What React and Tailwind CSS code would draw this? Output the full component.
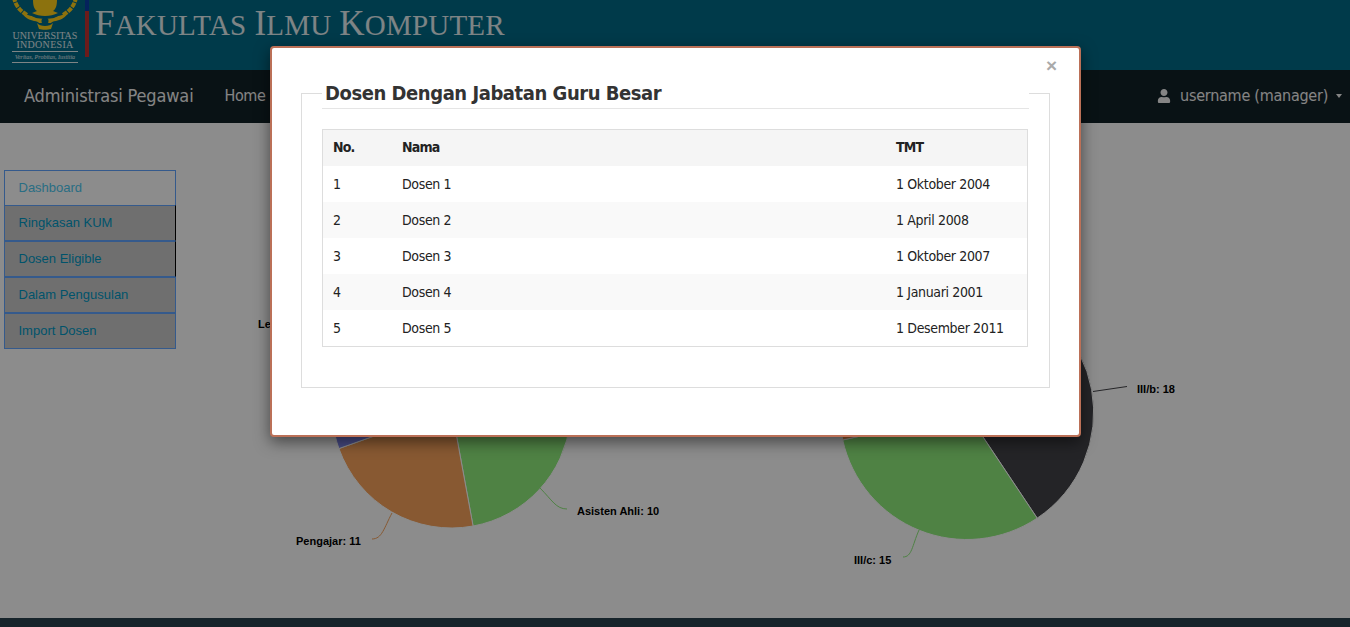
import React from 'react'
import { FaUser } from 'react-icons/fa'

const menu = [
  { label: 'Dashboard', cls: 'bg-white text-[#4cc8f0]' },
  { label: 'Ringkasan KUM', cls: '-mt-px bg-[#cbcbcb] text-[#0098c4] border-r-black' },
  { label: 'Dosen Eligible', cls: 'bg-[#cbcbcb] text-[#0098c4] border-r-black' },
  { label: 'Dalam Pengusulan', cls: 'bg-[#cbcbcb] text-[#0098c4]' },
  { label: 'Import Dosen', cls: 'bg-[#cbcbcb] text-[#0098c4]' },
]

const dosen = [
  ['1', 'Dosen 1', '1 Oktober 2004'],
  ['2', 'Dosen 2', '1 April 2008'],
  ['3', 'Dosen 3', '1 Oktober 2007'],
  ['4', 'Dosen 4', '1 Januari 2001'],
  ['5', 'Dosen 5', '1 Desember 2011'],
]

// angles are degrees clockwise from 12 o'clock, like highcharts draws them
const slicePath = (cx, cy, r, a, b) => {
  const pt = (d) => {
    const t = (d * Math.PI) / 180
    return `${(cx + r * Math.sin(t)).toFixed(2)} ${(cy - r * Math.cos(t)).toFixed(2)}`
  }
  return `M${cx} ${cy}L${pt(a)}A${r} ${r} 0 ${b - a > 180 ? 1 : 0} 1 ${pt(b)}Z`
}

const leftPie = [
  [0, 50, '#7cb5ec'],
  [50, 96.1, '#434348'],
  [96.1, 169.6, '#90ed7d'],
  [169.6, 250.4, '#f7a35c'],
  [250.4, 360, '#8085e9'],
]

const rightPie = [
  [0, 12.8, '#7cb5ec'],
  [12.8, 146.3, '#434348'],
  [146.3, 257.5, '#90ed7d'],
  [257.5, 360, '#f7a35c'],
]

const Charts = () => (
  <svg viewBox="176 123 1174 495" className="w-[1174px] h-[495px] shrink-0 font-['Liberation_Sans',sans-serif]">
    {leftPie.map(([a, b, c]) => (
      <path key={a} d={slicePath(451.5, 408.5, 119.5, a, b)} fill={c} stroke="#fff" strokeWidth="1" />
    ))}
    {rightPie.map(([a, b, c]) => (
      <path key={a} d={slicePath(966.7, 412.5, 127, a, b)} fill={c} stroke="#fff" strokeWidth="1" />
    ))}
    <g fill="none" strokeWidth="1">
      <path d="M540 488C552 500 556 509 567 509" stroke="#90ed7d" />
      <path d="M392 513C384 528 382 539 372 539" stroke="#f7a35c" />
      <path d="M1093 391.5L1127 386.5" stroke="#434348" />
      <path d="M919 530C912 546 912 557 903 557" stroke="#90ed7d" />
    </g>
    <g fontSize="11" fontWeight="700" fill="#000">
      <text x="258" y="328">Lektor: 9</text>
      <text x="577" y="515">Asisten Ahli: 10</text>
      <text x="296" y="545">Pengajar: 11</text>
      <text x="1137" y="393">III/b: 18</text>
      <text x="854" y="564">III/c: 15</text>
    </g>
  </svg>
)

const Makara = () => (
  <svg viewBox="0 0 66 30" className="w-[66px] h-[30px] block" fill="#ffcf1a">
    {/* wings */}
    <g fill="none" stroke="#ffcf1a" strokeWidth="4" strokeDasharray="5 1">
      <path d="M2 -3C3 5 8 11 15 15" />
      <path d="M64 -3C63 5 58 11 51 15" />
    </g>
    {/* body */}
    <path d="M21 0h24c0 5-1 9-4 11l5 2c-4 2-8 3-13 3s-9-1-13-3l5-2c-3-2-4-6-4-11Z" />
    {/* lotus */}
    <path d="M11 14c6 1 9 2 13 4 4 1 14 1 18 0 4-2 7-3 13-4-2 4-7 6-11 7-3 0-4 1-5 2H27c-1-1-2-2-5-2-4-1-9-3-11-7Z" />
    <path d="M25 23c3 4 13 4 16 0l-2 6c-3 1-9 1-12 0Z" />
    <circle cx="33" cy="21" r="3.5" fill="#006a87" />
  </svg>
)

// small caps look of the header logotype
const Caps = ({ text }) =>
  text.split(' ').map((w) => (
    <span key={w} className="mr-[8px]">
      <span className="text-[35px]">{w[0]}</span>
      <span className="text-[29px]">{w.slice(1).toUpperCase()}</span>
    </span>
  ))

const App = () => {
  return (
    <div className="relative h-[627px] overflow-hidden flex flex-col bg-white font-['DejaVu_Sans_Condensed','Noto_Sans',sans-serif]">

      {/* HEADER - page is scrolled a little so the top gets cut */}
      <div className="h-[70px] shrink-0 bg-[#006a87] flex overflow-hidden">
        <div className="w-[85px] shrink-0 pl-[12px]">
          <Makara />
          <div className="w-[66px] text-center text-white/90 font-['Liberation_Serif',serif] leading-[8px]">
            <div className="text-[10px] mt-[2px]">UNIVERSITAS</div>
            <div className="text-[10px] tracking-[0.3px] mt-px">INDONESIA</div>
            <div className="mt-[2px] border-y border-white/90 text-[6px] italic h-[12px] leading-[10px]">Veritas, Probitas, Iustitia</div>
          </div>
        </div>
        <div className="w-1 h-[57px] shrink-0 flex flex-col">
          <div className="h-[11px] bg-[#0a3fa8]" />
          <div className="flex-1 bg-[#c43232]" />
        </div>
        <div className="ml-[6px] font-['Liberation_Serif',serif] text-white/90 leading-[33px] -mt-[28px] whitespace-nowrap">
          <div className="tracking-[2.6px] -mb-[4px]"><Caps text="Sistem Informasi SDM" /></div>
          <div className="tracking-[0.2px]"><Caps text="Fakultas Ilmu Komputer" /></div>
        </div>
      </div>

      {/* NAVBAR */}
      <div className="h-[53px] shrink-0 bg-[#122127] flex items-center pb-[2px] text-[#f2f2f2]">
        <span className="ml-6 text-[18px] tracking-[-0.15px]">Administrasi Pegawai</span>
        <span className="ml-[31px] text-[16px] tracking-[-0.4px]">Home</span>
        <div className="ml-auto mr-2 flex items-center text-[16px]">
          <FaUser size={14} />
          <span className="ml-[9px] tracking-[-0.25px]">username (manager)</span>
          <span className="ml-2 mt-px w-0 h-0 border-x-[3.5px] border-x-transparent border-t-4 border-t-[#f2f2f2]" />
        </div>
      </div>

      {/* SIDEBAR + CHARTS */}
      <div className="flex-1 flex overflow-hidden">
        <div className="w-[176px] shrink-0 pl-1 pt-[47px]">
          <div className="w-[172px] font-['Liberation_Sans',sans-serif] text-[13px]">
            {menu.map((m) => (
              <div key={m.label} className={`h-[36px] border border-[#61a4ff] flex items-center pl-[13.5px] ${m.cls}`}>
                {m.label}
              </div>
            ))}
          </div>
        </div>
        <Charts />
      </div>

      {/* FOOTER */}
      <div className="h-[9px] shrink-0 bg-[#2a424f]" />

      {/* BACKDROP */}
      <div className="absolute inset-0 bg-black/45" />

      {/* MODAL */}
      <div className="absolute left-[270px] top-[46px] w-[811px] h-[391px] bg-white border-2 border-[#bb7057] rounded-[4px] shadow-[0_5px_15px_rgba(0,0,0,0.5)] text-[#222]">
        <span className="absolute right-[22px] top-[6px] text-[19px] leading-[24px] font-bold text-[#aaa] font-['Liberation_Sans',sans-serif]">×</span>
        <fieldset className="ml-[29px] mt-[30px] w-[749px] border border-[#ddd] px-5 pb-10">
          <legend className="w-full pl-[3px] h-[31px] text-[20px] tracking-[-0.45px] leading-[30px] font-bold text-[#333] border-b border-[#e5e5e5]">
            Dosen Dengan Jabatan Guru Besar
          </legend>
          <table className="mt-5 w-[706px] table-fixed border-separate border-spacing-0 border border-[#ddd] text-[14px] tracking-[-0.35px] text-[#222]">
            <thead>
              <tr className="h-[36px] bg-[#f5f5f5] text-left tracking-[-0.8px]">
                <th className="w-[69px] pl-[10px] pb-[2px] font-bold">No.</th>
                <th className="w-[494px] pl-[10px] pb-[2px] font-bold">Nama</th>
                <th className="pl-[10px] pb-[2px] font-bold">TMT</th>
              </tr>
            </thead>
            <tbody>
              {dosen.map((d, i) => (
                <tr key={d[0]} className={`h-[36px] ${i % 2 === 1 ? 'bg-[#f9f9f9]' : 'bg-white'}`}>
                  <td className="pl-[10px]">{d[0]}</td>
                  <td className="pl-[10px]">{d[1]}</td>
                  <td className="pl-[10px]">{d[2]}</td>
                </tr>
              ))}
            </tbody>
          </table>
        </fieldset>
      </div>

    </div>
  )
}

export default App
